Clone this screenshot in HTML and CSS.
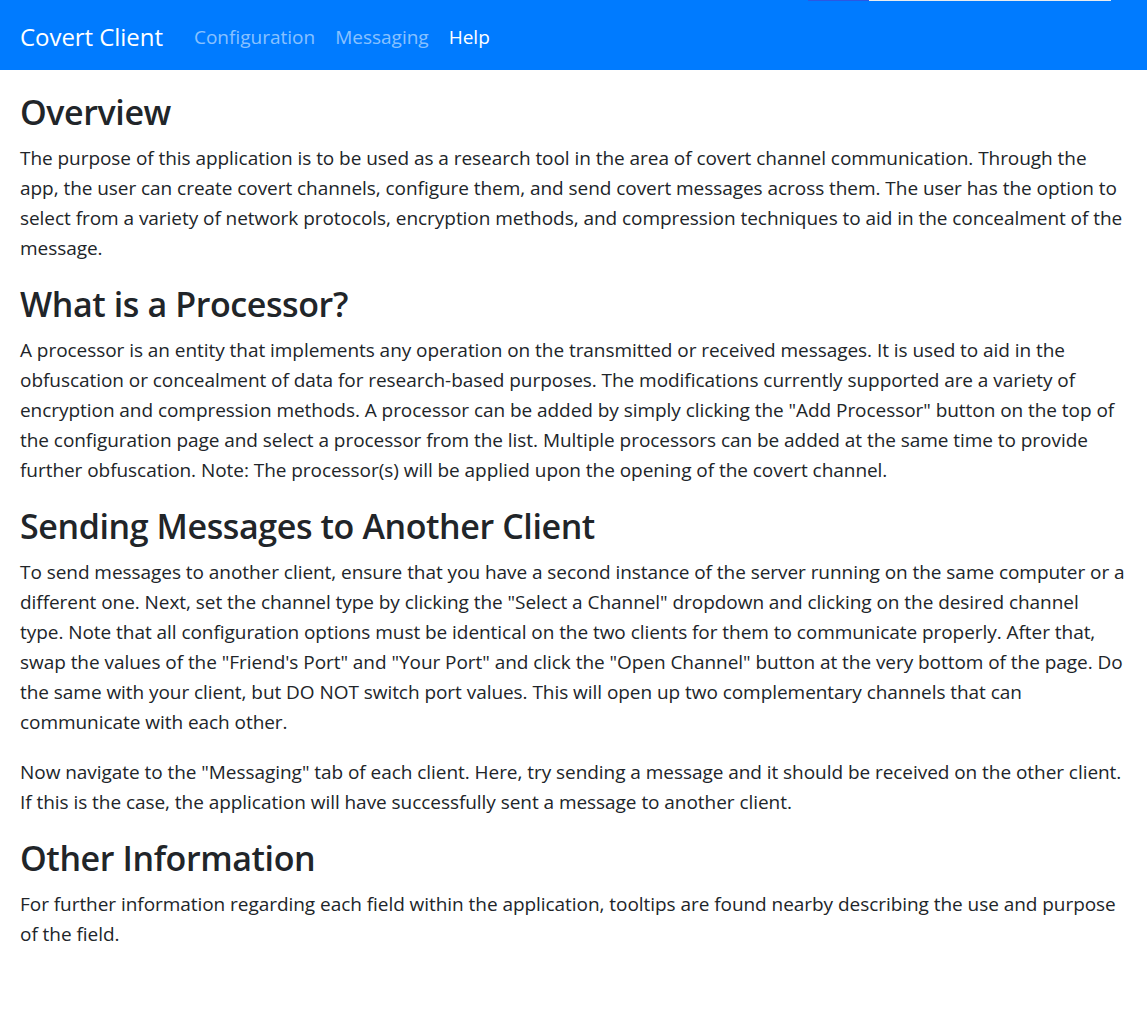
FILE: index.html
```html
<!DOCTYPE html>
<html lang="en">
<head>
<meta charset="utf-8">
<title>Covert Client</title>
<link rel="stylesheet" href="styles.css">
</head>
<body>
<nav class="navbar">
  <a class="brand" href="#">Covert Client</a>
  <ul class="nav">
    <li><a class="nav-link" href="#">Configuration</a></li>
    <li><a class="nav-link" href="#">Messaging</a></li>
    <li><a class="nav-link active" href="#">Help</a></li>
  </ul>
  <div class="edge"><span class="edge-btn"></span><span class="edge-input"></span></div>
</nav>
<main class="content">
  <h2>Overview</h2>
  <p>The purpose of this application is to be used as a research tool in the area of covert channel communication. Through the app, the user can create covert channels, configure them, and send covert messages across them. The user has the option to select from a variety of network protocols, encryption methods, and compression techniques to aid in the concealment of the message.</p>
  <h2>What is a Processor?</h2>
  <p>A processor is an entity that implements any operation on the transmitted or received messages. It is used to aid in the obfuscation or concealment of data for research-based purposes. The modifications currently supported are a variety of encryption and compression methods. A processor can be added by simply clicking the "Add Processor" button on the top of the configuration page and select a processor from the list. Multiple processors can be added at the same time to provide further obfuscation. Note: The processor(s) will be applied upon the opening of the covert channel.</p>
  <h2>Sending Messages to Another Client</h2>
  <p>To send messages to another client, ensure that you have a second instance of the server running on the same computer or a different one. Next, set the channel type by clicking the "Select a Channel" dropdown and clicking on the desired channel type. Note that all configuration options must be identical on the two clients for them to communicate properly. After that, swap the values of the "Friend's Port" and "Your Port" and click the "Open Channel" button at the very bottom of the page. Do the same with your client, but DO NOT switch port values. This will open up two complementary channels that can communicate with each other.</p>
  <p>Now navigate to the "Messaging" tab of each client. Here, try sending a message and it should be received on the other client. If this is the case, the application will have successfully sent a message to another client.</p>
  <h2>Other Information</h2>
  <p>For further information regarding each field within the application, tooltips are found nearby describing the use and purpose of the field.</p>
</main>
</body>
</html>
```

FILE: styles.css
```css
html, body {
  margin: 0;
  padding: 0;
}
body {
  font-family: "Open Sans", "Noto Sans", sans-serif;
  font-size: 19px;
  line-height: 30px;
  letter-spacing: -0.05px;
  color: #212529;
  background: #fff;
}
.navbar {
  position: relative;
  display: flex;
  align-items: center;
  height: 70px;
  box-sizing: border-box;
  padding: 3px 20px 0;
  background: #007bff;
}
.brand {
  font-size: 24px;
  line-height: 38px;
  color: #fff;
  text-decoration: none;
  margin-right: 21px;
}
.nav {
  display: flex;
  list-style: none;
  margin: 0;
  padding: 0;
}
.nav-link {
  display: block;
  padding: 0 10px;
  font-size: 19px;
  line-height: 30px;
  letter-spacing: 0;
  color: rgba(255, 255, 255, 0.55);
  text-decoration: none;
}
.nav-link.active {
  color: #fff;
}
.edge {
  position: absolute;
  top: 0;
  left: 808px;
  display: flex;
  height: 1px;
}
.edge-btn {
  width: 61px;
  background: #2b57e2;
}
.edge-input {
  width: 242px;
  background: #e9ecef;
}
.content {
  padding: 21px 22px 20px 20px;
}
h2 {
  font-size: 34px;
  line-height: 42px;
  font-weight: 600;
  letter-spacing: -0.4px;
  margin: 0 0 10px;
}
p {
  margin: 0 0 20px;
}
```
